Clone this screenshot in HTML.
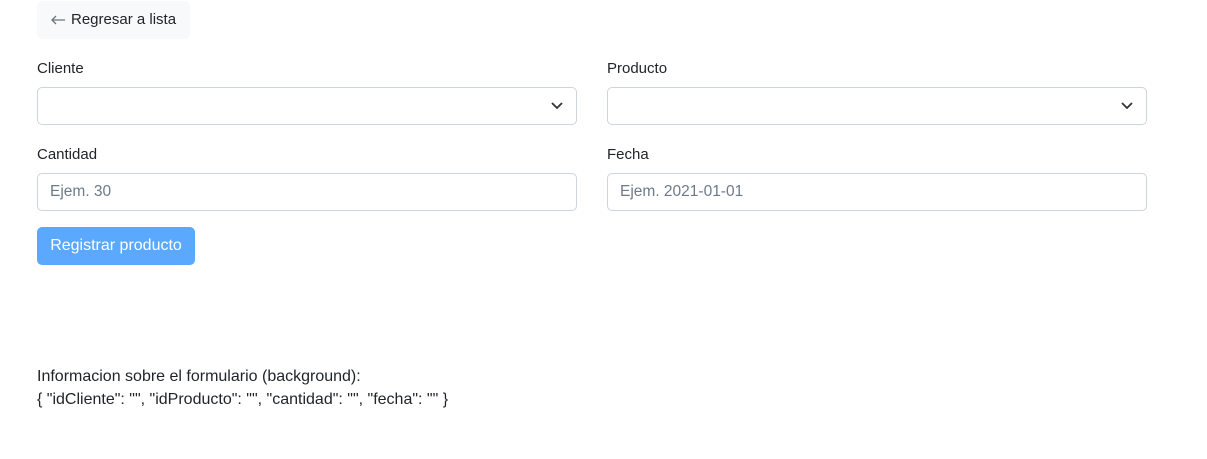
<!DOCTYPE html>
<html><head><meta charset="utf-8"><style>
*{box-sizing:border-box;margin:0;padding:0}
body{width:1207px;height:459px;background:#fff;font-family:"Liberation Sans",sans-serif;font-size:15px;color:#212529;position:relative;overflow:hidden}
.abs{position:absolute}
.back{left:37px;top:1px;width:153px;height:38px;background:#f8f9fa;border-radius:5px;line-height:38px;padding-left:34px;font-size:15px}
.lbl{font-size:15px}
.box{height:38px;border:1px solid #ced4da;border-radius:5px;background:#fff}
.ph{color:#6c7a8a;line-height:36px;padding-left:12px;font-size:15.5px}
.btn{left:37px;top:227px;width:158px;height:38px;background:#5aa9fe;border-radius:5px;color:#fff;line-height:38px;text-align:center;font-size:16px}
</style></head><body>
<div class="abs back"><svg class="abs" style="left:13px;top:13px" width="16" height="12" viewBox="0 0 16 12"><path d="M15 6H2M6 2L2 6l4 4" fill="none" stroke="#6c757d" stroke-width="1.3"/></svg>Regresar a lista</div>
<div class="abs lbl" style="left:37px;top:60px">Cliente</div>
<div class="abs lbl" style="left:607px;top:60px">Producto</div>
<div class="abs box" style="left:37px;top:87px;width:540px"><svg class="abs" style="right:13px;top:13px" width="12" height="10" viewBox="0 0 12 10"><path d="M1 2l5 5 5-5" fill="none" stroke="#333" stroke-width="1.8"/></svg></div>
<div class="abs box" style="left:607px;top:87px;width:540px"><svg class="abs" style="right:13px;top:13px" width="12" height="10" viewBox="0 0 12 10"><path d="M1 2l5 5 5-5" fill="none" stroke="#333" stroke-width="1.8"/></svg></div>
<div class="abs lbl" style="left:37px;top:146px">Cantidad</div>
<div class="abs lbl" style="left:607px;top:146px">Fecha</div>
<div class="abs box ph" style="left:37px;top:173px;width:540px">Ejem. 30</div>
<div class="abs box ph" style="left:607px;top:173px;width:540px">Ejem. 2021-01-01</div>
<div class="abs btn">Registrar producto</div>
<div class="abs" style="left:37px;top:365px;font-size:16px;line-height:23px">Informacion sobre el formulario (background):<br>{ "idCliente": "", "idProducto": "", "cantidad": "", "fecha": "" }</div>
</body></html>
